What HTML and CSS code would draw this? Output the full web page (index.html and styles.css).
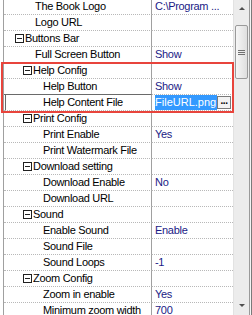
FILE: index.html
```html
<!DOCTYPE html>
<html lang="en">
<head>
    <meta charset="UTF-8">
    <meta name="viewport" content="width=device-width, initial-scale=1.0">
    <title>Property Grid</title>
    <link rel="stylesheet" href="styles.css">
</head>
<body>
    <div class="panel">
        <!-- Property rows -->
        <div class="grid">
            <div class="row"><div class="name lv1">The Book Logo</div><div class="value">C:\Program ...</div></div>
            <div class="row"><div class="name lv1">Logo URL</div><div class="value"></div></div>
            <div class="row"><div class="name cat1"><span class="toggle"></span>Buttons Bar</div><div class="value"></div></div>
            <div class="row"><div class="name lv1">Full Screen Button</div><div class="value">Show</div></div>
            <div class="row"><div class="name cat2"><span class="toggle"></span>Help Config</div><div class="value"></div></div>
            <div class="row before-selected"><div class="name lv2">Help Button</div><div class="value">Show</div></div>
            <div class="row selected">
                <div class="name lv2">Help Content File</div>
                <div class="value editor">
                    <span class="edit-text"><span class="sel">tFileURL.png</span></span>
                    <span class="browse">...</span>
                </div>
            </div>
            <div class="row"><div class="name cat2"><span class="toggle"></span>Print Config</div><div class="value"></div></div>
            <div class="row"><div class="name lv2">Print Enable</div><div class="value">Yes</div></div>
            <div class="row"><div class="name lv2">Print Watermark File</div><div class="value"></div></div>
            <div class="row"><div class="name cat2"><span class="toggle"></span>Download setting</div><div class="value"></div></div>
            <div class="row"><div class="name lv2">Download Enable</div><div class="value">No</div></div>
            <div class="row"><div class="name lv2">Download URL</div><div class="value"></div></div>
            <div class="row"><div class="name cat2"><span class="toggle"></span>Sound</div><div class="value"></div></div>
            <div class="row"><div class="name lv2">Enable Sound</div><div class="value">Enable</div></div>
            <div class="row"><div class="name lv2">Sound File</div><div class="value"></div></div>
            <div class="row"><div class="name lv2">Sound Loops</div><div class="value">-1</div></div>
            <div class="row"><div class="name cat2"><span class="toggle"></span>Zoom Config</div><div class="value"></div></div>
            <div class="row"><div class="name lv2">Zoom in enable</div><div class="value">Yes</div></div>
            <div class="row"><div class="name lv2">Minimum zoom width</div><div class="value">700</div></div>
        </div>

        <!-- Scrollbar -->
        <div class="scrollbar">
            <div class="arrow up"></div>
            <div class="track">
                <div class="thumb"><span></span><span></span><span></span></div>
            </div>
            <div class="arrow down"></div>
        </div>
        <div class="frame"></div>

        <!-- Highlight around the Help Config group -->
        <div class="highlight"></div>
    </div>
</body>
</html>
```

FILE: styles.css
```css
body {
    margin: 0;
    padding: 0;
    background-color: #ffffff;
    font-family: "Liberation Sans", Arial, sans-serif;
    font-size: 11px;
    letter-spacing: -0.3px;
}
.panel {
    position: relative;
    display: flex;
    width: 252px;
    height: 315px;
    overflow: hidden;
}
.grid {
    width: 229px;
    margin-left: 3px;
    margin-top: -1px;
    border-left: 1px solid #a0a0a0;
}
.row {
    display: flex;
    height: 16px;
}
.name {
    width: 148px;
    box-sizing: border-box;
    border-right: 1px solid #a0a0a0;
    border-bottom: 1px dotted #b8b8b8;
    color: #000000;
    line-height: 15px;
    white-space: nowrap;
    overflow: hidden;
    display: flex;
    align-items: center;
}
.value {
    flex: 1;
    min-width: 0;
    border-bottom: 1px dotted #b8b8b8;
    color: #1a1a86;
    line-height: 15px;
    padding-left: 3px;
    white-space: nowrap;
    overflow: hidden;
}
.lv1 {
    padding-left: 31px;
}
.lv2 {
    padding-left: 39px;
}
.cat1 {
    padding-left: 11px;
}
.cat2 {
    padding-left: 19px;
}
.toggle {
    position: relative;
    width: 7px;
    height: 7px;
    border: 1px solid #202020;
    margin-right: 1px;
    flex: none;
}
.toggle::after {
    content: "";
    position: absolute;
    left: 1px;
    top: 3px;
    width: 5px;
    height: 1px;
    background-color: #202020;
}
.before-selected .name {
    border-bottom: 1px solid #6a6a6a;
}
.selected .name {
    box-shadow: inset 1px 0 0 #ffffff, inset 2px 0 0 #6a6a6a;
}
.editor {
    display: flex;
    align-items: center;
    padding-left: 3px;
    padding-right: 2px;
}
.edit-text {
    flex: 1;
    min-width: 0;
    overflow: hidden;
    display: flex;
}
.sel {
    background-color: #3399ff;
    color: #ffffff;
    padding-right: 1px;
    margin-left: -3px;
    letter-spacing: 0;
}
.browse {
    flex: none;
    width: 14px;
    height: 13px;
    box-sizing: border-box;
    border: 1px solid #7a7a7a;
    background-color: #f2f2f2;
    color: #000000;
    font-size: 10px;
    font-weight: bold;
    line-height: 7px;
    text-align: center;
    letter-spacing: -0.5px;
}
.scrollbar {
    width: 17px;
    display: flex;
    flex-direction: column;
    background-color: #ececec;
    border-left: 1px solid #e2e2e2;
}
.arrow {
    height: 17px;
    position: relative;
}
.arrow::after {
    content: "";
    position: absolute;
    left: 5px;
    border-left: 3px solid transparent;
    border-right: 3px solid transparent;
}
.up::after {
    top: 7px;
    border-bottom: 3px solid #505050;
}
.down::after {
    top: 6px;
    border-top: 3px solid #505050;
}
.track {
    flex: 1;
    padding-top: 8px;
}
.thumb {
    height: 54px;
    margin: 0 1px;
    box-sizing: border-box;
    border: 1px solid #9a9a9a;
    border-radius: 2px;
    background: linear-gradient(to right, #f6f6f6, #dedede);
    display: flex;
    flex-direction: column;
    justify-content: center;
    align-items: center;
    gap: 1px;
}
.thumb span {
    width: 7px;
    height: 1px;
    background-color: #707070;
}
.frame {
    width: 3px;
    border-left: 1px solid #9a9a9a;
    border-right: 1px solid #7a7a7a;
    box-sizing: border-box;
    background-color: #f4f4f4;
}
.highlight {
    position: absolute;
    left: 1px;
    top: 62px;
    width: 229px;
    height: 47px;
    border: 2px solid #e8443c;
}
```
